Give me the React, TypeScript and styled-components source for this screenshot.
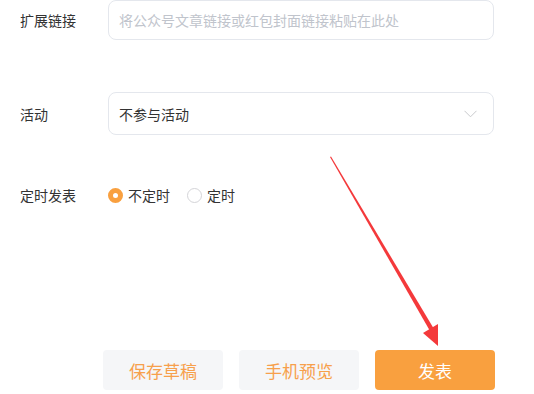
import React from "react";
import styled, { createGlobalStyle } from "styled-components";

const GlobalStyle = createGlobalStyle`
  html, body {
    margin: 0;
    padding: 0;
    background: #fff;
  }
  body {
    font-family: "Noto Sans CJK SC", "Noto Sans", sans-serif;
    color: #333;
  }
`;

const Page = styled.div`
  position: relative;
  width: 534px;
  height: 394px;
  overflow: hidden;
`;

const Form = styled.div`
  display: flex;
  flex-direction: column;
  padding-left: 20px;
`;

const Row = styled.div<{ $top: number; $height: number }>`
  display: flex;
  align-items: center;
  margin-top: ${(p) => p.$top}px;
  height: ${(p) => p.$height}px;
`;

const Label = styled.div`
  width: 88px;
  font-size: 14px;
  color: #333;
  flex-shrink: 0;
`;

const Field = styled.div`
  box-sizing: border-box;
  width: 386px;
  height: 100%;
  border: 1px solid #e4e7ed;
  border-radius: 8px;
  display: flex;
  align-items: center;
  justify-content: space-between;
  padding: 0 16px 0 10px;
  font-size: 14px;
`;

const Placeholder = styled.span`
  color: #c0c4cc;
`;

const Value = styled.span`
  color: #333;
`;

const RadioGroup = styled.div`
  display: flex;
  align-items: center;
  gap: 17px;
`;

const RadioItem = styled.label`
  display: flex;
  align-items: center;
  gap: 5px;
  font-size: 14px;
  color: #333;
`;

const RadioDot = styled.span<{ $checked?: boolean }>`
  box-sizing: border-box;
  width: 15px;
  height: 15px;
  border-radius: 50%;
  border: ${(p) => (p.$checked ? "5px solid #f9a03f" : "1px solid #d4d4d8")};
  background: #fff;
`;

const Actions = styled.div`
  display: flex;
  gap: 16px;
  margin-top: 145px;
  padding-left: 83px;
`;

const Button = styled.button<{ $primary?: boolean }>`
  width: 120px;
  height: 40px;
  border: none;
  border-radius: 4px;
  font-family: inherit;
  font-size: 17px;
  cursor: pointer;
  background: ${(p) => (p.$primary ? "#f9a03f" : "#f5f6f8")};
  color: ${(p) => (p.$primary ? "#fff" : "#f7a04c")};
`;

const Arrow = styled.svg`
  position: absolute;
  left: 0;
  top: 0;
  pointer-events: none;
`;

export default function App() {
  return (
    <Page>
      <GlobalStyle />
      <Form>
        <Row $top={0} $height={40}>
          <Label>扩展链接</Label>
          <Field>
            <Placeholder>将公众号文章链接或红包封面链接粘贴在此处</Placeholder>
          </Field>
        </Row>
        <Row $top={52} $height={43}>
          <Label>活动</Label>
          <Field>
            <Value>不参与活动</Value>
            <svg width="13" height="8" viewBox="0 0 13 8">
              <path d="M0.5 0.8 L6.5 6.8 L12.5 0.8" fill="none" stroke="#c8c9cc" strokeWidth="1" />
            </svg>
          </Field>
        </Row>
        <Row $top={50} $height={20}>
          <Label>定时发表</Label>
          <RadioGroup>
            <RadioItem>
              <RadioDot $checked />
              不定时
            </RadioItem>
            <RadioItem>
              <RadioDot />
              定时
            </RadioItem>
          </RadioGroup>
        </Row>
        <Actions>
          <Button>保存草稿</Button>
          <Button>手机预览</Button>
          <Button $primary>发表</Button>
        </Actions>
      </Form>
      <Arrow width="534" height="394" viewBox="0 0 534 394">
        <polygon points="330,157 331,156.5 434,329 430,331" fill="#f4393b" />
        <polygon points="423,333 438,324 438,346" fill="#f4393b" />
      </Arrow>
    </Page>
  );
}
